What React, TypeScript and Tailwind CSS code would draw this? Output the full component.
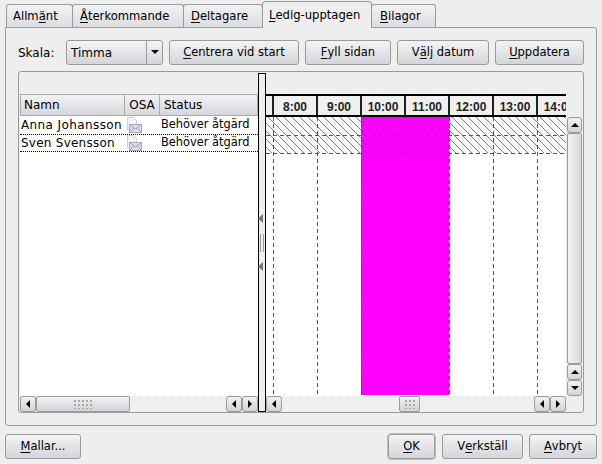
import React from "react";

const Arrow = ({ d }: { d: "u" | "d" | "l" | "r" }) => {
  const pts = { u: "0,5 8,5 4,1", d: "0,1 8,1 4,5", l: "5,0 5,8 1,4", r: "1,0 1,8 5,4" }[d];
  const vert = d === "u" || d === "d";
  return (
    <svg width={vert ? 8 : 6} height={vert ? 6 : 8} className="block">
      <polygon points={pts} fill="#000" />
    </svg>
  );
};

const SBtn = ({ d, cls = "" }: { d: "u" | "d" | "l" | "r"; cls?: string }) => (
  <div className={`flex shrink-0 items-center justify-center rounded-[3px] border border-[#9a9a9a] bg-gradient-to-b from-[#f2f2f4] to-[#d2d3d8] ${cls}`}>
    <Arrow d={d} />
  </div>
);

const U = ({ children }: { children: React.ReactNode }) => <span className="underline underline-offset-2">{children}</span>;

const Btn = ({ children, cls = "" }: { children: React.ReactNode; cls?: string }) => (
  <div className={`flex h-[25px] items-center justify-center whitespace-nowrap rounded-[3px] border border-[#9a9a9a] bg-gradient-to-b from-[#f4f4f6] to-[#d4d5da] text-[11.5px] text-black ${cls}`}>
    {children}
  </div>
);

const Tab = ({ children, cls, active = false }: { children: React.ReactNode; cls: string; active?: boolean }) => (
  <div
    className={
      active
        ? `relative z-10 -mb-px flex h-[27px] items-center whitespace-nowrap rounded-t-[4px] border border-b-0 border-[#9a9a9a] bg-[#eeeeee] pt-px text-[11.6px] ${cls}`
        : `mt-[3px] flex h-[23px] items-center whitespace-nowrap rounded-t-[3px] border border-b-0 border-[#9a9a9a] bg-gradient-to-b from-[#f2f2f4] to-[#dcdde1] pt-px text-[11.6px] ${cls}`
    }
  >
    {children}
  </div>
);

const Row = ({ name, focus = false, nameCls }: { name: string; focus?: boolean; nameCls: string }) => (
  <div className={`flex h-[18px] items-center whitespace-nowrap text-black ${focus ? "border-y border-dotted border-black" : ""}`}>
    <div className={`w-[107px] pl-px ${nameCls}`}>{name}</div>
    <div className="flex w-[34px] justify-start">
      <svg width="16" height="17" viewBox="0 0 16 17" className="block">
        <path d="M0.5 0.5h6l3 3v9h-9z" fill="#f2f2fa" stroke="#d0d0e0" />
        <path d="M2.5 7.5h12v8h-12z" fill="#dcdcec" stroke="#a8a8c4" />
        <path d="M2.5 7.5l6 4.5 6-4.5M2.5 15.5l4-4.5M14.5 15.5l-4-4.5" fill="none" stroke="#a0a0bc" />
      </svg>
    </div>
    <div className="text-[11.4px]">Behöver åtgärd</div>
  </div>
);

const hours = ["8:00", "9:00", "10:00", "11:00", "12:00", "13:00", "14:00"];

const Chart = () => {
  const xs = [7, 51, 95, 139, 183, 227, 271];
  return (
    <svg width="300" height="279" className="block" shapeRendering="crispEdges">
      <defs>
        <pattern id="hatch" width="8" height="8" patternUnits="userSpaceOnUse" patternTransform="translate(2 1)">
          <path d="M-1 -1L9 9M-1 7L1 9M7 -1L9 1" stroke="#444" strokeWidth="0.7" shapeRendering="auto" />
        </pattern>
      </defs>
      <rect x="95" width="88" height="279" fill="#ff00ff" />
      <rect y="1" width="300" height="36" fill="url(#hatch)" />
      <rect width="300" height="1" fill="#000" />
      {xs.map((x) => (
        <line key={x} x1={x + 0.5} y1="1" x2={x + 0.5} y2="279" stroke="#555" strokeDasharray="4 3" />
      ))}
      <line x1="0" y1="19.5" x2="300" y2="19.5" stroke="#555" strokeDasharray="4 3" />
      <line x1="0" y1="37.5" x2="300" y2="37.5" stroke="#555" strokeDasharray="4 3" />
    </svg>
  );
};

const Trough = "bg-[repeating-conic-gradient(#e6e6e6_0_25%,#f8f8f8_0_50%)] bg-[length:2px_2px]";

export default function App() {
  return (
    <div
      className="flex h-[464px] w-[602px] flex-col overflow-hidden bg-[#eeeeee] text-[12px] text-black"
      style={{ fontFamily: '"DejaVu Sans", sans-serif' }}
    >
      <div className="flex h-[27px] pl-[6px] pt-px">
        <Tab cls="w-[67px] pl-[6px]">Allm<U>ä</U>nt</Tab>
        <Tab cls="-ml-px w-[112px] pl-[7px]"><U>Å</U>terkommande</Tab>
        <Tab cls="-ml-px w-[80px] pl-[7px]"><U>D</U>eltagare</Tab>
        <Tab cls="-ml-px w-[110px] pl-[6px]" active><U>L</U>edig-upptagen</Tab>
        <Tab cls="-ml-px w-[65px] pl-[8px]"><U>B</U>ilagor</Tab>
      </div>
      <div className="mx-[5px] flex h-[399px] flex-col rounded-b-[3px] rounded-tr-[3px] border border-[#9a9a9a] px-[12px] pt-[12px]">
        <div className="flex h-[25px] items-center">
          <span className="w-[48px]">Skala:</span>
          <div className="flex h-[25px] w-[97px] items-center rounded-[3px] border border-[#9a9a9a] bg-gradient-to-b from-[#f4f4f6] to-[#d4d5da]">
            <span className="flex-1 pl-[4px]">Timma</span>
            <div className="flex h-full w-[16px] items-center justify-center border-l border-[#9a9a9a]">
              <svg width="8" height="5"><polygon points="0,0 8,0 4,4" fill="#000" /></svg>
            </div>
          </div>
          <Btn cls="ml-[6px] w-[130px]"><U>C</U>entrera vid start</Btn>
          <Btn cls="ml-[6px] w-[86px]"><U>F</U>yll sidan</Btn>
          <Btn cls="ml-[6px] w-[92px]">V<U>ä</U>lj datum</Btn>
          <Btn cls="ml-[6px] w-[89px]"><U>U</U>ppdatera</Btn>
        </div>
        <div className="mt-[6px] flex h-[342px] rounded-[3px] border border-[#9a9a9a] px-px">
          {/* left list */}
          <div className="flex w-[238px] flex-col pt-[22px]">
            <div className="flex h-[22px] border border-[#aaaaaa] bg-gradient-to-b from-[#f2f2f4] to-[#d6d7db]">
              <div className="flex w-[104px] items-center border-r border-[#aaaaaa] pl-[3px]">Namn</div>
              <div className="flex w-[35px] items-center justify-center border-r border-[#aaaaaa]">OSA</div>
              <div className="flex flex-1 items-center pl-[4px]">Status</div>
            </div>
            <div className="flex-1 bg-white">
              <Row name="Anna Johansson" nameCls="tracking-[0.4px]" />
              <Row name="Sven Svensson" nameCls="tracking-[0.25px]" focus />
            </div>
            <div className="flex h-[16px]">
              <SBtn d="l" cls="w-[16px]" />
              <div className="flex w-[94px] items-center justify-center rounded-[2px] border border-[#9a9a9a] bg-gradient-to-b from-[#f2f2f4] to-[#d2d3d8]">
                <div className="h-[10px] w-[20px] bg-[radial-gradient(#a8a8a8_1px,transparent_1px)] bg-[length:4px_4px]" />
              </div>
              <div className={`flex-1 ${Trough}`} />
              <SBtn d="l" cls="w-[16px]" />
              <SBtn d="r" cls="w-[16px]" />
            </div>
          </div>
          {/* splitter */}
          <div className="relative mt-px flex w-[8px] shrink-0 items-center justify-center border border-black bg-[#eeeeee]">
            <div className="h-[18px] w-[4px] border-x border-[#999999]" />
            <svg width="5" height="9" className="absolute -left-px top-[140px]"><polygon points="5,0 5,9 0,4.5" fill="#777" /></svg>
            <svg width="5" height="9" className="absolute -left-px top-[188px]"><polygon points="5,0 5,9 0,4.5" fill="#777" /></svg>
          </div>
          {/* gantt */}
          <div className="flex min-w-0 flex-1 flex-col pt-[22px]">
            <div className="flex flex-1">
              <div className="flex w-[300px] flex-col">
                <div
                  className="flex h-[22px] w-[300px] overflow-hidden border-t-2 border-b border-black bg-[#f0f0f0] text-[12px] font-bold text-[#222]"
                  style={{ fontFamily: '"Liberation Sans", sans-serif' }}
                >
                  <div className="w-[8px] shrink-0 border-r-2 border-[#222]" />
                  {hours.map((h) => (
                    <div key={h} className="flex w-[44px] shrink-0 items-center justify-center border-r-2 border-[#222] pt-[2px]">
                      {h}
                    </div>
                  ))}
                </div>
                <div className="flex-1 bg-white">
                  <Chart />
                </div>
              </div>
              <div className="flex w-[16px] flex-col pl-px pt-[23px]">
                <SBtn d="u" cls="h-[16px]" />
                <div className="flex-1 rounded-[2px] border border-[#9a9a9a] bg-gradient-to-r from-[#f2f2f4] to-[#d8d9dd]" />
                <SBtn d="u" cls="h-[16px]" />
                <SBtn d="d" cls="h-[16px]" />
              </div>
            </div>
            <div className="flex h-[16px] pr-[16px]">
              <SBtn d="l" cls="w-[16px]" />
              <div className={`flex-1 ${Trough}`}>
                <div className="ml-[117px] flex h-[16px] w-[21px] items-center justify-center rounded-[2px] border border-[#9a9a9a] bg-gradient-to-b from-[#f2f2f4] to-[#d2d3d8]">
                  <div className="h-[10px] w-[12px] bg-[radial-gradient(#a8a8a8_1px,transparent_1px)] bg-[length:4px_4px]" />
                </div>
              </div>
              <SBtn d="l" cls="w-[16px]" />
              <SBtn d="r" cls="w-[16px]" />
            </div>
          </div>
        </div>
      </div>
      <div className="flex flex-1 items-start px-[5px] pt-[8px]">
        <Btn cls="w-[76px]"><U>M</U>allar...</Btn>
        <div className="flex-1" />
        <Btn cls="w-[47px] outline outline-1 outline-[#bbbbbb]"><U>O</U>K</Btn>
        <Btn cls="ml-[7px] w-[81px]">V<U>e</U>rkställ</Btn>
        <Btn cls="ml-[6px] w-[68px]"><U>A</U>vbryt</Btn>
      </div>
    </div>
  );
}
